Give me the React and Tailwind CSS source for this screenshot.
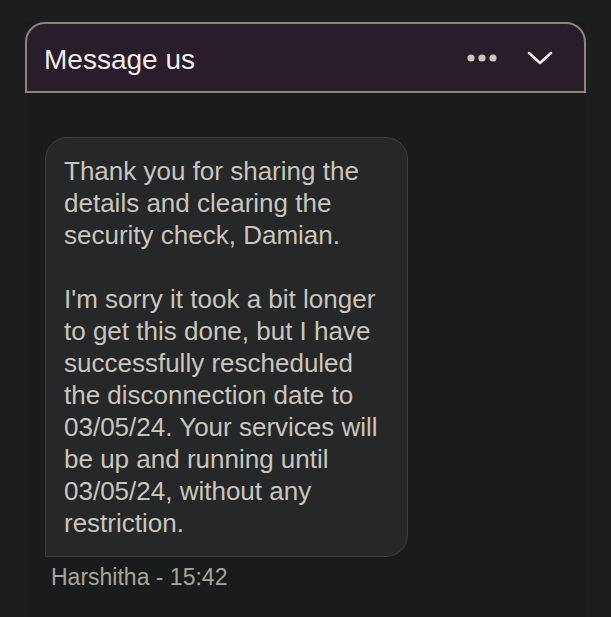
import React from 'react';

const MoreIcon = () => (
    <svg width="32" height="10" viewBox="0 0 32 10" fill="#cbc6bb">
        <circle cx="5" cy="5" r="3.6" />
        <circle cx="16" cy="5" r="3.6" />
        <circle cx="27" cy="5" r="3.6" />
    </svg>
);

const ChevronIcon = () => (
    <svg width="28" height="18" viewBox="0 0 28 18" fill="none" stroke="#e9e6e1" strokeWidth="2.6" strokeLinecap="round" strokeLinejoin="round">
        <path d="M3 4 L14 14 L25 4" />
    </svg>
);

const App = () => {
    return (
        <div className="min-h-[617px] bg-[#1c1d1f] pt-[22px] px-[25px] flex font-['Liberation_Sans',Arial,sans-serif]">
            <div className="flex-1 flex flex-col bg-[#1a1b1d]">
                {/* Header */}
                <div className="h-[71px] bg-[#291c2b] border-2 border-[#8c8576] rounded-t-[20px] flex items-center pl-[17px] pr-[30px]">
                    <h1 className="text-[28px] text-[#f1ede7] flex-1 mt-[5px]">Message us</h1>
                    <div className="flex items-center gap-[28px]">
                        <MoreIcon />
                        <ChevronIcon />
                    </div>
                </div>

                {/* Messages */}
                <div className="pt-[44px] pl-[20px]">
                    <div className="w-[363px] bg-[#262729] border border-[#3b3c3e] rounded-[22px] rounded-bl-none px-[18px] py-[17px] text-[26px] leading-[32px] text-[#c9c5bd]">
                        <p>Thank you for sharing the details and clearing the security check, Damian.</p>
                        <p className="mt-[32px]">
                            I'm sorry it took a bit longer to get this done, but I have successfully rescheduled the disconnection date to 03/05/24. Your services will be up and running until 03/05/24, without any restriction.
                        </p>
                    </div>
                    <p className="mt-[7px] ml-[6px] text-[23px] leading-[26px] text-[#a9a498]">Harshitha - 15:42</p>
                </div>
            </div>
        </div>
    );
};

export default App;
